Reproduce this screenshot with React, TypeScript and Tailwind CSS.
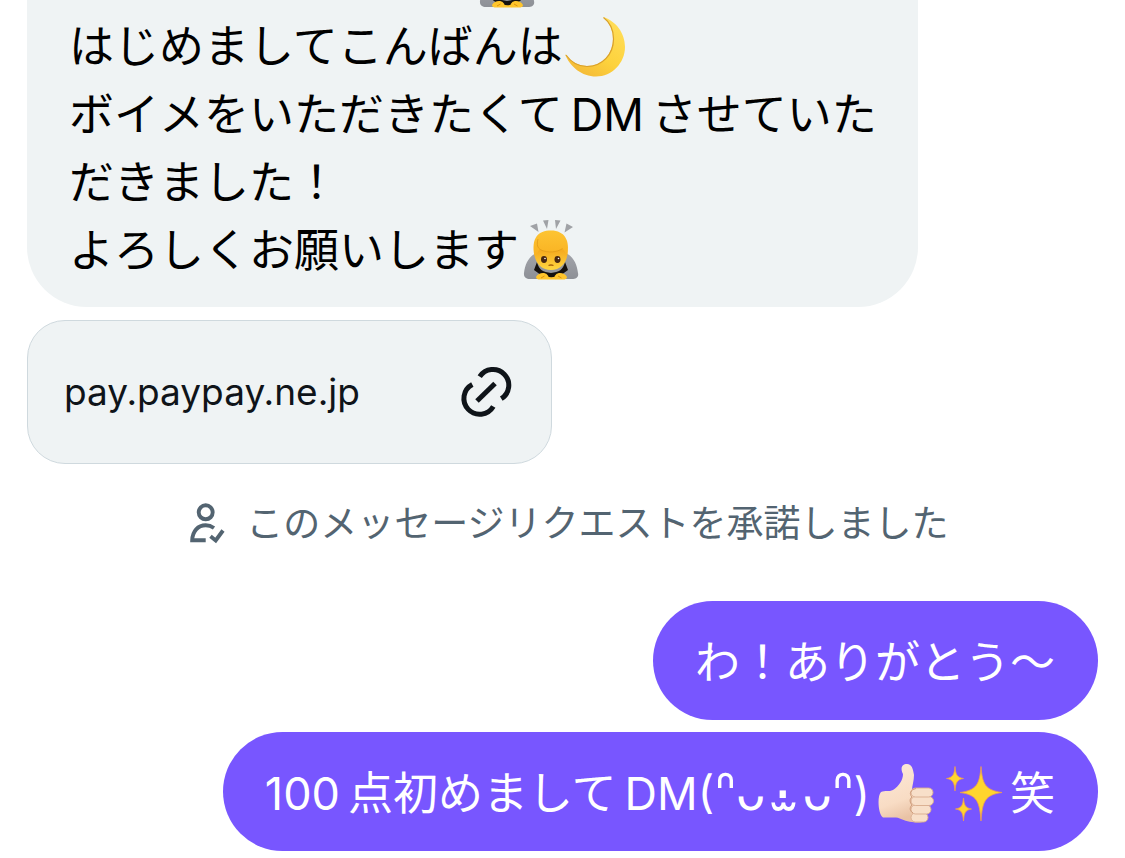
import type { ReactNode } from "react";

function BowEmoji() {
  return (
    <svg role="img" aria-label="お辞儀" viewBox="0 0 56 62" className="inline-block h-[62px] w-[56px] shrink-0">
      <defs>
        <linearGradient id="hair" x1="0" y1="0" x2="0" y2="1">
          <stop offset="0" stopColor="#fdc433" />
          <stop offset="1" stopColor="#f9b222" />
        </linearGradient>
        <linearGradient id="face" x1="0" y1="0" x2="0" y2="1">
          <stop offset="0.500" stopColor="#f6ac20" />
          <stop offset="1" stopColor="#ffd640" />
        </linearGradient>
        <linearGradient id="sleeve" x1="0" y1="0" x2="0" y2="1">
          <stop offset="0" stopColor="#a2a4aa" />
          <stop offset="1" stopColor="#8d9096" />
        </linearGradient>
      </defs>
      <path d="M7 6 L14 3.500 L15.500 12Z M20 .5 L25.500 0 L24 9Z M32 0 L37.500 .5 L33 9Z M43.500 3.500 L50 7 L41.500 12.500Z" fill="#a0a2a6" />
      <path d="M13 33 C5 37 2 45 1 53 C.5 57 3 59 7 59 H49 C53 59 56 57 55 53 C54 45 51 37 43 33Z" fill="url(#sleeve)" />
      <path d="M14 42 C16 50 20 52 28 53 C36 52 40 50 42 42 L45 50 L34 58 H22 L11 50Z" fill="#15110e" />
      <path d="M11 30 C11 17 18 12 28 12 C38 12 44.500 18 44.500 32 C44.500 43 37 50 28 50 C18.500 50 11 43 11 30Z" fill="url(#face)" />
      <path d="M11.500 36 C8 18 15 10.500 28 10.500 C42 10.500 47.500 21 44 36 C43 33 41.500 31 39.500 28.500 C33 33.500 22 33 17 29 C15 32 13 34 11.500 36Z" fill="url(#hair)" />
      <path d="M15 19 C13.500 25 14.500 28 18 30 C25 33 34 32.500 39.500 28.500" fill="none" stroke="#e19a18" strokeWidth="0.800" />
      <ellipse cx="21" cy="39.500" rx="3" ry="3.400" fill="#472711" />
      <ellipse cx="34.500" cy="39.500" rx="3" ry="3.400" fill="#472711" />
      <circle cx="22" cy="38.500" r="0.800" fill="#ffffff" />
      <circle cx="35.500" cy="38.500" r="0.800" fill="#ffffff" />
      <path d="M25.500 45.500 Q28 44.500 30.500 45.500" fill="none" stroke="#a5600d" strokeWidth="1.300" />
      <path d="M13 57 C15 52.500 22 52 24 54.500 C26 56 26 58 24 59.500 H17 C15 59.500 13 59 13 57Z" fill="#ffc52c" />
      <path d="M44 57 C42 52.500 35 52 33 54.500 C31 56 31 58 33 59.500 H40 C42 59.500 44 59 44 57Z" fill="#ffc52c" />
      <path d="M24 56.500 Q28 58 33 56.500 V59.500 H24Z" fill="#ffc52c" />
      <path d="M18 58 L21.500 56 M38.500 58 L35 56" fill="none" stroke="#dd930e" strokeWidth="1" />
    </svg>
  );
}

function MoonEmoji() {
  return (
    <svg role="img" aria-label="三日月" viewBox="0 0 60 60" className="ml-0.5 inline-block size-[60px] shrink-0">
      <defs>
        <linearGradient id="moon" x1="0.900" y1="0.200" x2="0.400" y2="1">
          <stop offset="0" stopColor="#ffdc55" />
          <stop offset="0.600" stopColor="#fdd23c" />
          <stop offset="1" stopColor="#f5bd38" />
        </linearGradient>
      </defs>
      <path d="M38 0 C51 4 60 16 60 30 C60 46 47 59.500 31 59.500 C17 59.500 5 50 0 37 C7 46 15 49 22 49 C37 49 48 37 48 22 C48 13 44 5 38 0Z" fill="url(#moon)" />
      <path d="M1 38 C7 46.500 15 49.500 22 49.500 C37.500 49.500 48.500 37 48.500 22 C48.500 13 44.500 5 38.500 .5" fill="none" stroke="#d9a02c" strokeWidth="1.200" />
    </svg>
  );
}

function ThumbEmoji() {
  return (
    <svg role="img" aria-label="いいね" viewBox="0 0 56 60" className="inline-block h-[60px] w-[56px] shrink-0">
      <defs>
        <linearGradient id="skin" x1="0" y1="0" x2="0.300" y2="1">
          <stop offset="0" stopColor="#fdeada" />
          <stop offset="0.700" stopColor="#f8dcc4" />
          <stop offset="1" stopColor="#e9c2a5" />
        </linearGradient>
      </defs>
      <path d="M3 28 C7 26 11 28 15 26 C21 22 25 16 25 10 C22 4 24 0 29 0 C34 0 35 5 36 11 C36 17 34 22 34 26 L48 54 C47 59 42 59 34 58 C28 58 23 54 18 53.500 H5 C0 50 -1 32 3 28Z" fill="url(#skin)" />
      <g fill="#f8dfc9" stroke="#d9ad8e" strokeWidth="0.900">
        <rect x="33" y="49" width="17" height="9" rx="4.500" />
        <rect x="33" y="41" width="20" height="9" rx="4.500" />
        <rect x="33" y="32.500" width="22.500" height="9" rx="4.500" />
        <rect x="33" y="24" width="22" height="9" rx="4.500" />
      </g>
      <path d="M38 24.500 C32 26 31 30 34 33 C31 35 32 39 34 41 C31 44 32 47 35 49" fill="none" stroke="#cf9c7b" strokeWidth="1" />
    </svg>
  );
}

function SparklesEmoji() {
  return (
    <svg role="img" aria-label="キラキラ" viewBox="0 0 56 60" className="inline-block h-[60px] w-[56px] shrink-0">
      <g fill="#ffd52e" stroke="#ee9c52" strokeWidth="0.800">
        <path d="M35 2.500 C36.500 20 39 26 56 28.500 C39 31 36.500 37 35 57 C33.500 37 31 31 14 28.500 C31 26 33.500 20 35 2.500Z" />
        <path d="M9 2.500 C9.700 10.500 11 13.500 17.500 14.500 C11 15.500 9.700 18.500 9 27 C8.300 18.500 7 15.500 .5 14.500 C7 13.500 8.300 10.500 9 2.500Z" />
        <path d="M17.500 34 C18.200 41.500 19.500 44 25.500 45 C19.500 46 18.200 48.500 17.500 57 C16.800 48.500 15.500 46 9.500 45 C15.500 44 16.800 41.500 17.500 34Z" />
      </g>
    </svg>
  );
}

function LinkIcon() {
  return (
    <svg aria-hidden="true" viewBox="0 0 52 52" className="size-[52px] shrink-0" fill="none" stroke="#0f1419" strokeWidth="5">
      <path d="M19.700 10.700 A15.800 15.800 0 1 1 41.300 32.700" />
      <path d="M12.300 18.500 A15.800 15.800 0 1 0 33.300 40.500" />
      <path d="M17 35 L35 17.500" />
    </svg>
  );
}

function PersonCheckIcon() {
  return (
    <svg aria-hidden="true" viewBox="0 0 38 44" className="h-[44px] w-[38px] shrink-0" fill="none" stroke="#536471" strokeWidth="3.900">
      <circle cx="17.700" cy="10.300" r="7" />
      <path d="M17.700 38.300 H4.200 C4.500 29 10 23.300 17.700 23.300 C21 23.300 23.500 24.300 26 26" />
      <path d="M22.500 34.300 L27.700 38.500 L35 28.500" />
    </svg>
  );
}

function Latin({ children }: { children: ReactNode }) {
  return <span className="mx-2">{children}</span>;
}

function Kaomoji() {
  return (
    <span>
      (
      <span className="font-['DejaVu_Sans'] leading-[0px]">
        <span className="text-[56px]">ᐢ</span>
        <span className="text-[48px]">ᴗ</span>
        <span className="mr-1 ml-2 align-[12px] text-[60px]">{".\u200a\u032b"}</span>
        <span className="text-[48px]">ᴗ</span>
        <span className="text-[56px]">ᐢ</span>
      </span>
      )
    </span>
  );
}

function Outgoing({ children }: { children: ReactNode }) {
  return (
    <p className="flex items-center self-end rounded-[60px] bg-[#7856ff] pt-[28px] pr-[43px] pb-[24px] pl-[42px] text-[45px] leading-[67px] whitespace-nowrap text-white">
      {children}
    </p>
  );
}

export default function App() {
  return (
    <main className="flex min-h-screen flex-col bg-white px-[27px] font-['Inter','Noto_Sans_CJK_JP',sans-serif]">
      <article className="max-w-[891px] rounded-b-[60px] bg-[#eff3f4] pr-[36px] pb-[22px] pl-[42px] text-[45px] leading-[68px] text-black">
        <div className="flex h-[13px] items-end overflow-hidden pl-[410px]">
          <div className="flex h-[68px] items-center">
            <BowEmoji />
          </div>
        </div>
        <p className="flex items-center">
          はじめましてこんばんは
          <MoonEmoji />
        </p>
        <p>
          ボイメをいただきたくて<Latin>DM</Latin>させていた
        </p>
        <p>だきました！</p>
        <p className="flex items-center gap-1">
          よろしくお願いします
          <BowEmoji />
        </p>
      </article>

      <a
        href="#pay"
        className="mt-[13px] flex h-[144px] w-[525px] max-w-full items-center justify-between rounded-[38px] border border-[#cfd9de] bg-[#eff3f4] pr-[39px] pl-[36px] text-[37px] text-[#0f1419]"
      >
        pay.paypay.ne.jp
        <LinkIcon />
      </a>

      <p className="mt-[32px] flex items-center justify-center gap-5 pl-3 text-[37px] leading-[56px] text-[#536471]">
        <PersonCheckIcon />
        このメッセージリクエストを承諾しました
      </p>

      <section className="mt-[49px] flex flex-col gap-3">
        <Outgoing>わ！ありがとう〜</Outgoing>
        <Outgoing>
          <span>
            100<span className="ml-2">点初めまして</span>
            <Latin>
              DM
              <Kaomoji />
            </Latin>
          </span>
          <ThumbEmoji />
          <span className="w-3" />
          <SparklesEmoji />
          <span className="ml-2">笑</span>
        </Outgoing>
      </section>
    </main>
  );
}
